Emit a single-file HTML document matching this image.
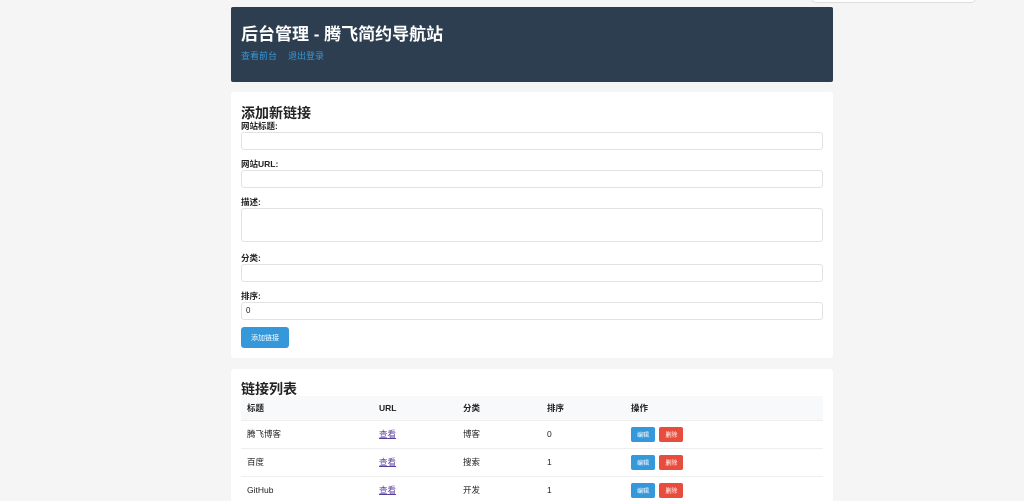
<!DOCTYPE html>
<html><head><meta charset="utf-8"><style>
*{box-sizing:border-box;margin:0;padding:0}
html,body{width:1024px;height:501px;overflow:hidden}
body{background:#f5f5f5;font-family:"Liberation Sans","Noto Sans CJK SC",sans-serif;position:relative;color:#222}
.pop{position:absolute;left:811px;top:-10px;width:165px;height:13px;background:#fff;border:1px solid #ddd;border-radius:5px}
.hdr{position:absolute;left:231px;top:7px;width:602px;height:75px;background:#2c3e50;border-radius:2px}
.hdr h1{position:absolute;left:10px;top:13px;color:#fff;font-size:17px;font-weight:bold;white-space:nowrap}
.hdr .ln{position:absolute;left:10px;top:42px;font-size:9px;color:#3498db}
.hdr .ln span{margin-right:11px}
.card{position:absolute;left:231px;width:602px;background:#fff;border-radius:3px}
h2{position:absolute;left:10px;font-size:14px;font-weight:bold;white-space:nowrap}
.lb{position:absolute;left:10px;font-size:8.5px;font-weight:bold}
.in{position:absolute;left:10px;width:582px;height:18px;border:1px solid #e2e2e2;border-radius:3px;font-size:8px;padding-left:4px;line-height:16px}
.btn{position:absolute;left:10px;top:235px;width:48px;height:21px;background:#3498db;color:#fff;border-radius:3px;font-size:7px;display:flex;align-items:center;justify-content:center}
table{position:absolute;left:10px;top:27px;width:582px;border-collapse:collapse;font-size:8.5px}
th{background:#f8f9fa;text-align:left;height:24px;font-weight:bold;padding-left:6px}
td{height:28px;border-top:1px solid #eee;padding-left:6px}
td a{color:#5a3da0;text-decoration:underline}
.b{display:inline-flex;align-items:center;justify-content:center;width:24px;height:15px;color:#fff;font-size:6px;border-radius:2px;margin-right:2px;vertical-align:middle}
</style></head><body>
<div class="pop"></div>
<div class="hdr"><h1>后台管理 - 腾飞简约导航站</h1><div class="ln"><span>查看前台</span><span>退出登录</span></div></div>
<div class="card" style="top:92px;height:266px">
<h2 style="top:11px">添加新链接</h2>
<div class="lb" style="top:28px">网站标题:</div><div class="in" style="top:40px"></div>
<div class="lb" style="top:66px">网站URL:</div><div class="in" style="top:78px"></div>
<div class="lb" style="top:104px">描述:</div><div class="in" style="top:116px;height:34px"></div>
<div class="lb" style="top:160px">分类:</div><div class="in" style="top:172px"></div>
<div class="lb" style="top:198px">排序:</div><div class="in" style="top:210px">0</div>
<div class="btn">添加链接</div>
</div>
<div class="card" style="top:369px;height:140px">
<h2 style="top:10px">链接列表</h2>
<table>
<tr><th style="width:132px">标题</th><th style="width:84px">URL</th><th style="width:84px">分类</th><th style="width:84px">排序</th><th>操作</th></tr>
<tr><td>腾飞博客</td><td><a>查看</a></td><td>博客</td><td>0</td><td><span class="b" style="background:#3498db">编辑</span> <span class="b" style="background:#e74c3c">删除</span></td></tr>
<tr><td>百度</td><td><a>查看</a></td><td>搜索</td><td>1</td><td><span class="b" style="background:#3498db">编辑</span> <span class="b" style="background:#e74c3c">删除</span></td></tr>
<tr><td>GitHub</td><td><a>查看</a></td><td>开发</td><td>1</td><td><span class="b" style="background:#3498db">编辑</span> <span class="b" style="background:#e74c3c">删除</span></td></tr>
</table>
</div>
</body></html>
